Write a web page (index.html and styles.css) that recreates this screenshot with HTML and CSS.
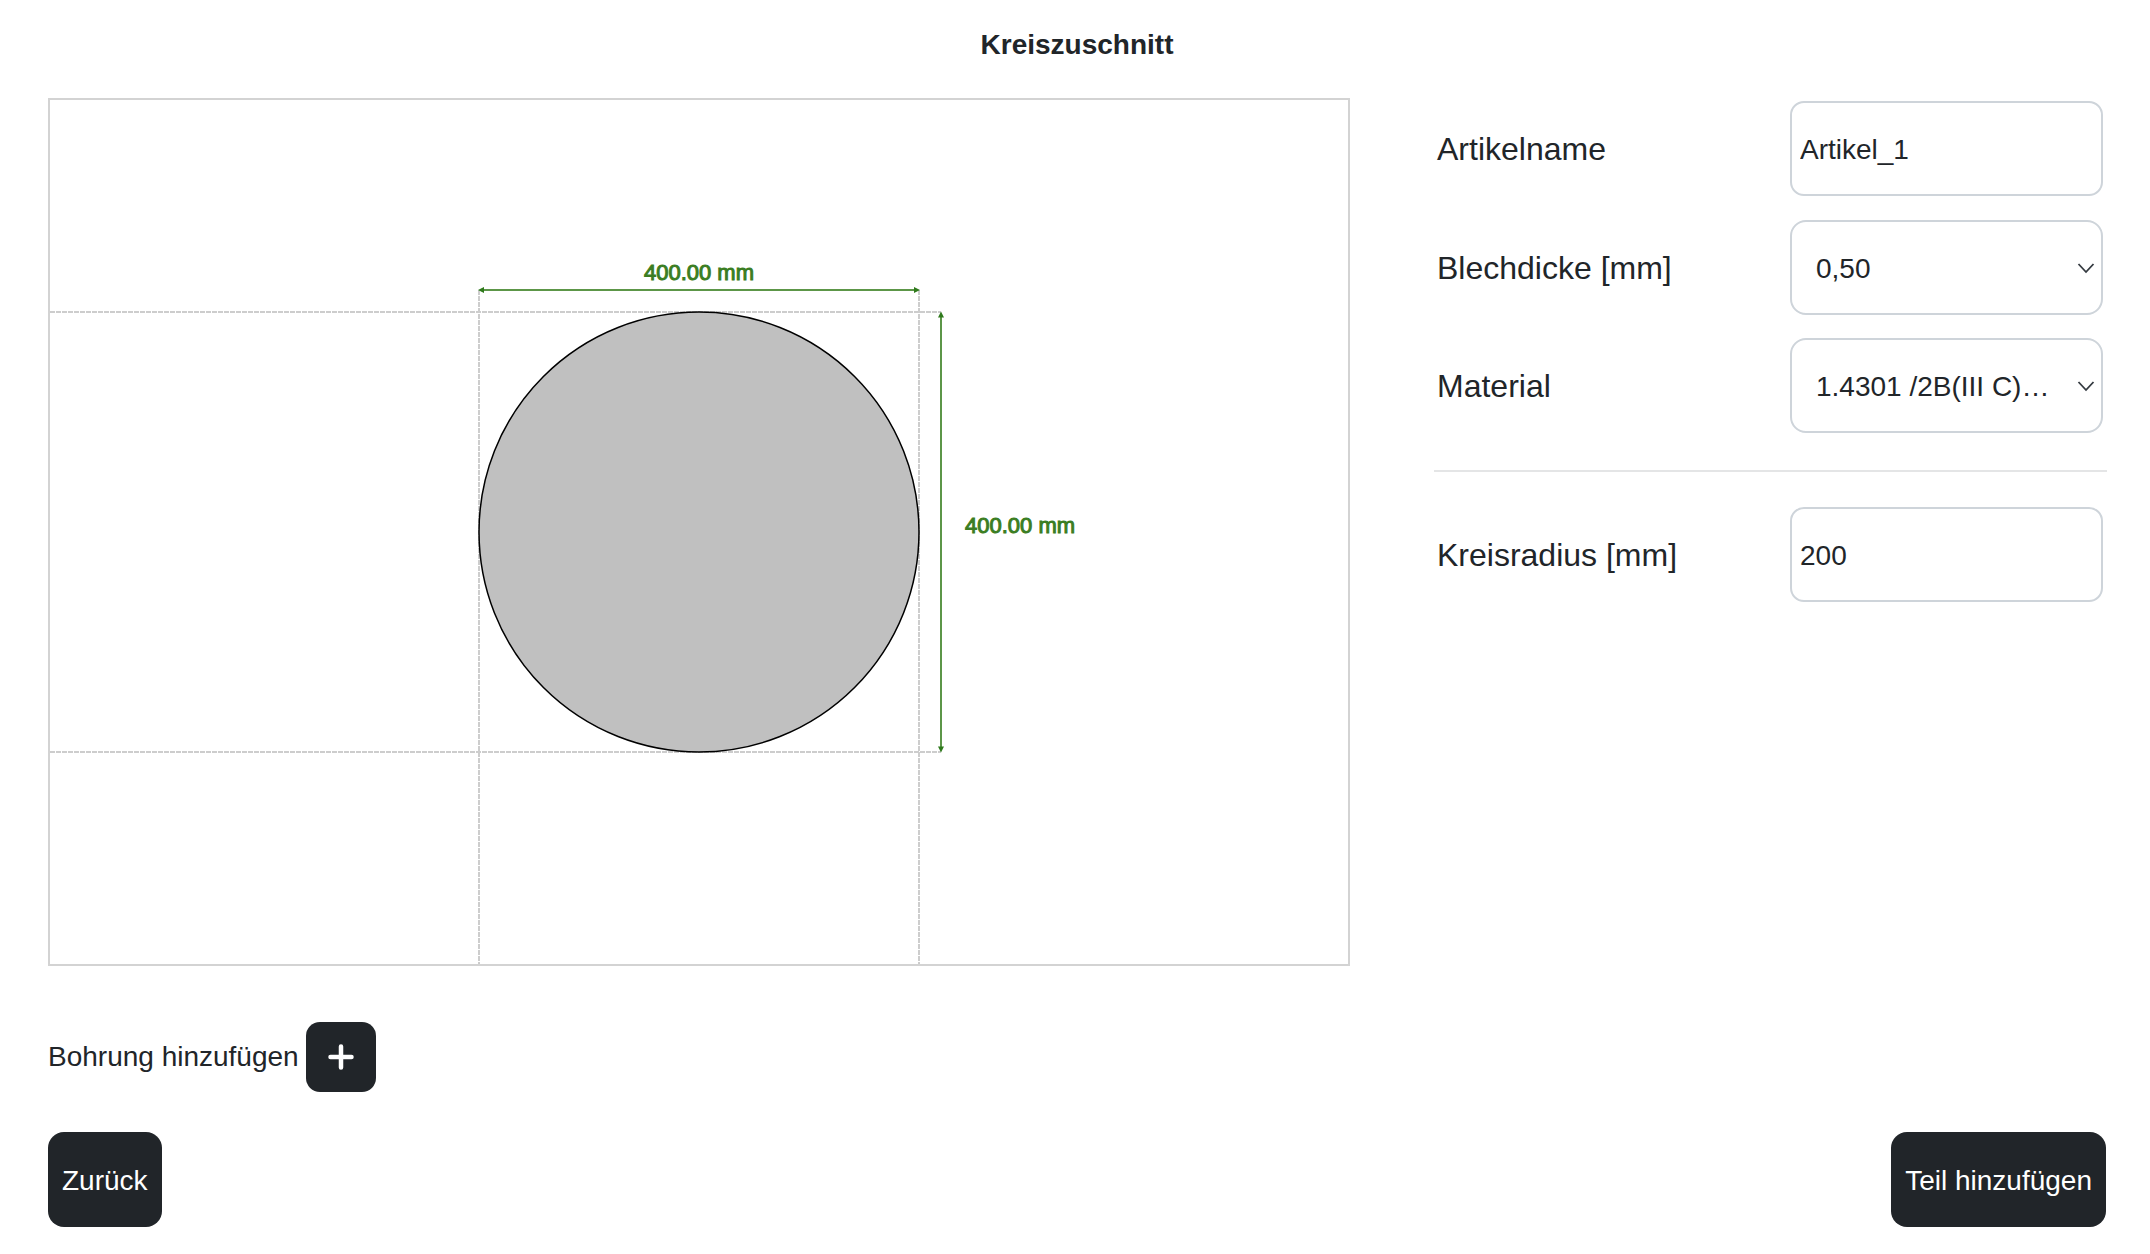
FILE: index.html
```html
<!DOCTYPE html>
<html lang="de">
<head>
    <meta charset="UTF-8">
    <meta name="viewport" content="width=device-width, initial-scale=1.0">
    <title>Kreiszuschnitt</title>
    <link rel="stylesheet" href="styles.css">
</head>
<body>
    <div class="page">
        <h1>Kreiszuschnitt</h1>

        <div class="main">
            <div class="left">
                <svg class="canvas" width="1298" height="864" viewBox="0 0 1298 864">
                    <!-- guide lines -->
                    <g class="guide">
                        <line x1="0" y1="212" x2="891" y2="212"></line>
                        <line x1="0" y1="652" x2="891" y2="652"></line>
                        <line x1="429" y1="190" x2="429" y2="864"></line>
                        <line x1="869" y1="190" x2="869" y2="864"></line>
                    </g>

                    <circle class="part" cx="649" cy="432" r="220"></circle>

                    <!-- dimensions -->
                    <g class="dim-line">
                        <line x1="432" y1="190" x2="866" y2="190"></line>
                        <line x1="891" y1="215" x2="891" y2="649"></line>
                    </g>
                    <g class="dim-arrow">
                        <polygon points="428,190 434,187 434,193"></polygon>
                        <polygon points="870,190 864,187 864,193"></polygon>
                        <polygon points="891,211.5 888,217.5 894,217.5"></polygon>
                        <polygon points="891,652.5 888,646.5 894,646.5"></polygon>
                    </g>
                    <text class="dim-text" x="649" y="180" text-anchor="middle">400.00 mm</text>
                    <text class="dim-text" x="915" y="433">400.00 mm</text>
                </svg>

                <div class="hole-row">
                    <span>Bohrung hinzufügen</span>
                    <button class="btn btn-add" type="button" aria-label="Bohrung hinzufügen">
                        <svg width="28" height="28" viewBox="0 0 28 28">
                            <path d="M14 3.5V24.5M3.5 14H24.5"></path>
                        </svg>
                    </button>
                </div>
            </div>

            <form class="form">
                <div class="form-row">
                    <label for="name">Artikelname</label>
                    <input type="text" id="name" value="Artikel_1">
                </div>
                <div class="form-row">
                    <label for="thickness">Blechdicke [mm]</label>
                    <div class="select-wrap">
                        <select id="thickness">
                            <option>0,50</option>
                            <option>1,00</option>
                            <option>1,50</option>
                        </select>
                        <svg class="chevron" width="18" height="12" viewBox="0 0 18 12">
                            <path d="M1.5 2L9 10L16.5 2"></path>
                        </svg>
                    </div>
                </div>
                <div class="form-row">
                    <label for="material">Material</label>
                    <div class="select-wrap">
                        <select id="material">
                            <option>1.4301 /2B(III C)…</option>
                        </select>
                        <svg class="chevron" width="18" height="12" viewBox="0 0 18 12">
                            <path d="M1.5 2L9 10L16.5 2"></path>
                        </svg>
                    </div>
                </div>
                <hr>
                <div class="form-row">
                    <label for="radius">Kreisradius [mm]</label>
                    <input type="text" id="radius" value="200">
                </div>
            </form>
        </div>

        <div class="footer">
            <button class="btn" type="button">Zurück</button>
            <button class="btn" type="button">Teil hinzufügen</button>
        </div>
    </div>
</body>
</html>
```

FILE: styles.css
```css
body {
    font-family: "Liberation Sans", Arial, sans-serif;
    font-size: 28px;
    color: #212529;
    background-color: #fff;
    margin: 0;
}

.page {
    padding: 0 44px 0 48px;
}

h1 {
    font-size: 28px;
    font-weight: 700;
    line-height: 34px;
    text-align: center;
    margin: 0;
    padding: 28px 0 36px;
}

.main {
    display: flex;
    gap: 84px;
}

.left {
    width: 1302px;
    flex-shrink: 0;
}

.canvas {
    display: block;
    border: 2px solid #d3d3d3;
}

.guide line {
    stroke: #cdcdcd;
    stroke-width: 2;
    stroke-dasharray: 5 1;
}

.part {
    fill: #c0c0c0;
    stroke: #000;
    stroke-width: 1.5;
}

.dim-line line {
    stroke: #5c9648;
    stroke-width: 2;
}

.dim-arrow polygon {
    fill: #2f7a1c;
}

.dim-text {
    font-family: "Liberation Sans", Arial, sans-serif;
    font-size: 22px;
    fill: #3a7d22;
    stroke: #3a7d22;
    stroke-width: 1;
}

.hole-row {
    display: flex;
    align-items: center;
    gap: 7px;
    margin-top: 56px;
}

.btn {
    font-family: inherit;
    font-size: 28px;
    color: #fff;
    background-color: #212529;
    border: none;
    border-radius: 16px;
    height: 95px;
    padding: 2px 14px 0;
    cursor: pointer;
}

.btn-add {
    width: 70px;
    height: 70px;
    padding: 0;
    border-radius: 14px;
    display: flex;
    align-items: center;
    justify-content: center;
}

.btn-add path {
    fill: none;
    stroke: #fff;
    stroke-width: 4.5;
    stroke-linecap: round;
}

.form {
    flex: 1;
    padding-top: 3px;
}

.form-row {
    display: flex;
    align-items: center;
    height: 95px;
    margin-bottom: 23.5px;
    padding: 0 4px 0 3px;
}

.form-row label {
    font-size: 32px;
    width: 353px;
    padding-top: 2px;
    flex-shrink: 0;
}

input, select {
    font-family: inherit;
    font-size: 28px;
    color: #212529;
    background-color: #fff;
    border: 2px solid #ced4da;
    border-radius: 14px;
    width: 313px;
    height: 95px;
    box-sizing: border-box;
    padding: 2px 8px 0;
    outline: none;
}

.select-wrap {
    position: relative;
    width: 313px;
}

select {
    display: block;
    appearance: none;
    border-radius: 16px;
    padding: 2px 24px 0;
}

.chevron {
    position: absolute;
    top: 42px;
    right: 8px;
    pointer-events: none;
}

.chevron path {
    fill: none;
    stroke: #343a40;
    stroke-width: 1.8;
}

hr {
    border: none;
    border-top: 2px solid #e4e5e6;
    margin: 36.5px 0 35.5px;
}

.footer {
    display: flex;
    justify-content: space-between;
    margin-top: 40px;
}
```
